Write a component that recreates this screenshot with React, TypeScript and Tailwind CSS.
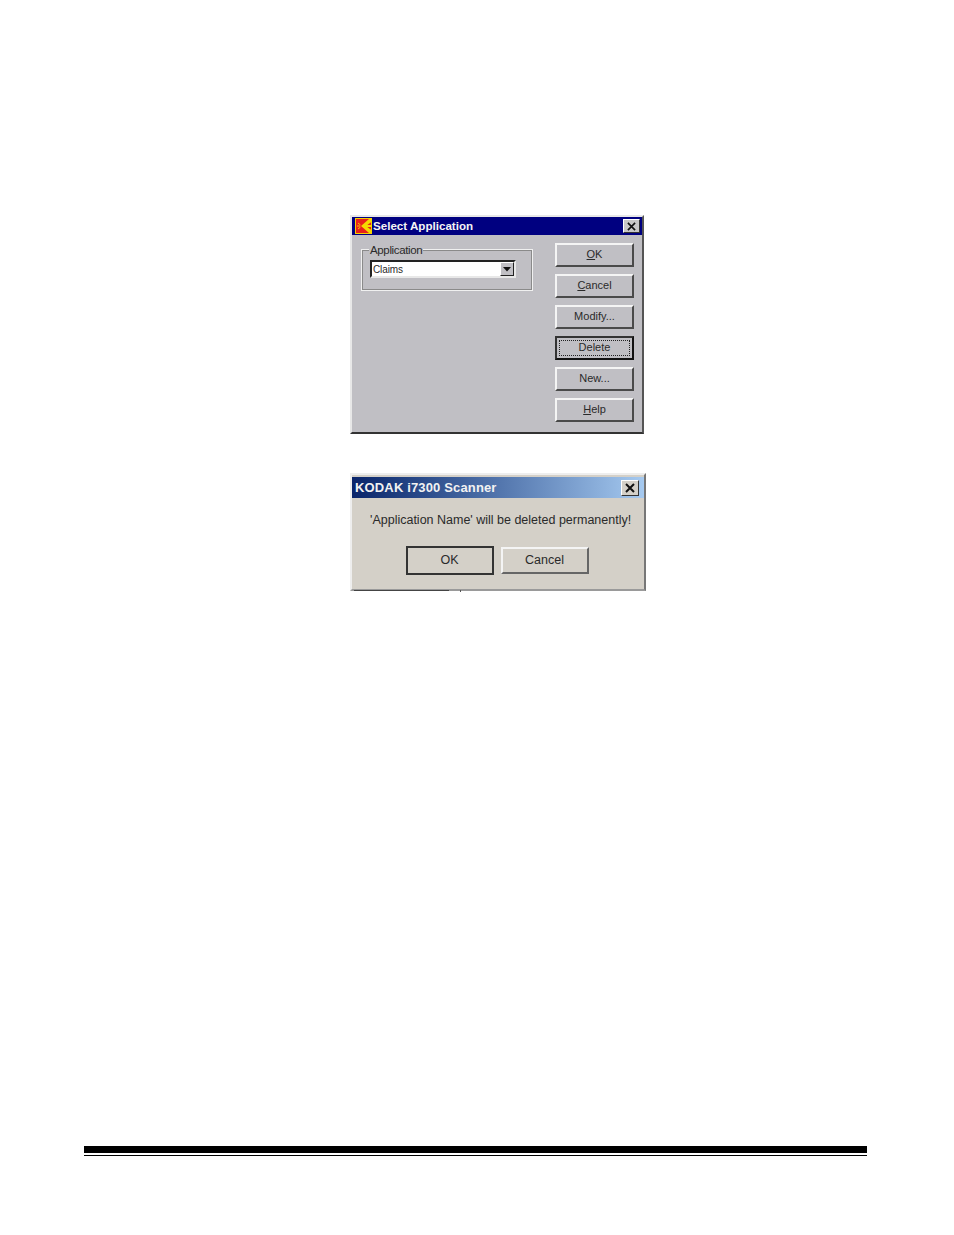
const FONT = "font-['Liberation_Sans',Arial,sans-serif]";

function Win98Button({ label, ul, focused }: { label: string; ul?: string; focused?: boolean }) {
  const rest = ul ? label.slice(1) : label;
  const inner = (
    <span className="pb-px text-[11px] leading-none text-[#2a2a2a]">
      {ul ? <span className="underline">{ul}</span> : null}
      {rest}
    </span>
  );
  if (focused) {
    return (
      <div className="flex h-6 w-[79px] items-center justify-center border-2 border-t-[#333] border-l-[#333] border-r-[#111] border-b-[#111] bg-[#c0bfc4]">
        <div className="flex h-[16px] w-[71px] items-center justify-center border border-dotted border-[#222]">{inner}</div>
      </div>
    );
  }
  return (
    <div className="flex h-6 w-[79px] items-center justify-center border-2 border-t-[#f4f4f4] border-l-[#f4f4f4] border-r-[#4a4a4a] border-b-[#4a4a4a] bg-[#c0bfc4]">
      {inner}
    </div>
  );
}

function KodakIcon() {
  return (
    <svg width="17" height="16" viewBox="0 0 17 16" className="shrink-0">
      <rect width="17" height="16" fill="#f5d000" />
      <rect x="1" y="1" width="15" height="14" fill="#e8201a" />
      <path d="M14 1 L17 1 L17 3.5 L11 8 L17 12.5 L17 15 L14 15 L6 8 Z" fill="#f5d800" />
      <rect x="11" y="7" width="6" height="2" fill="#f5d800" />
      <path d="M5.5 7 L3 5 M5 8 L2 8 M5.5 9 L3 11" stroke="#f5d800" strokeWidth="0.9" />
    </svg>
  );
}

function CloseX({ size, stroke }: { size: number; stroke: number }) {
  return (
    <svg width={size} height={size} viewBox="0 0 10 10">
      <path d="M1 1 L9 9 M9 1 L1 9" stroke="#111" strokeWidth={stroke} />
    </svg>
  );
}

function SelectApplication() {
  return (
    <div className="flex h-[219px] w-[294px] flex-col border-2 border-t-[#e8e8e8] border-l-[#e8e8e8] border-r-[#555] border-b-[#333] bg-[#c0bfc4]">
      <div className="flex h-[18px] items-center justify-between bg-[#000080] pl-[3px] pr-[2px]">
        <div className="flex items-center gap-[1px]">
          <KodakIcon />
          <span className="text-[11.6px] font-bold leading-[14px] text-[#f4f4f4]">Select Application</span>
        </div>
        <div className="flex h-[14px] w-[17px] items-center justify-center border border-t-white border-l-white border-r-[#333] border-b-[#333] bg-[#c8c8c8]">
          <CloseX size={9} stroke={1.8} />
        </div>
      </div>
      <div className="flex flex-1 justify-between pl-[9px] pr-2 pt-2">
        <div className="relative mt-[6px] h-[42px] w-[172px] border-2 border-[#f0f0f0] pl-[7px] pt-[9px] outline outline-1 -outline-offset-2 outline-[#8a8a8a]">
          <span className="absolute -top-[7px] left-[6px] bg-[#c0bfc4] px-[1px] text-[11.5px] leading-[13px] tracking-[-0.35px] text-[#2a2a2a]">Application</span>
          <div className="flex h-[18px] w-[146px] items-center justify-between border-2 border-t-[#222] border-l-[#222] border-r-[#e8e8e8] border-b-[#e8e8e8] bg-white pl-[1px]">
            <span className="pt-px text-[10px] leading-none tracking-[-0.1px] text-[#2a2a2a]">Claims</span>
            <div className="flex h-[14px] w-[14px] items-center justify-center border border-t-white border-l-white border-r-[#222] border-b-[#222] bg-[#c0bfc4]">
              <svg width="8" height="5" viewBox="0 0 8 5">
                <path d="M0 0 H8 L4 4.5 Z" fill="#111" />
              </svg>
            </div>
          </div>
        </div>
        <div className="flex flex-col gap-[7px]">
          <Win98Button label="OK" ul="O" />
          <Win98Button label="Cancel" ul="C" />
          <Win98Button label="Modify..." />
          <Win98Button label="Delete" focused />
          <Win98Button label="New..." />
          <Win98Button label="Help" ul="H" />
        </div>
      </div>
    </div>
  );
}

function ConfirmDelete() {
  return (
    <div className="relative flex h-[118px] w-[296px] flex-col border-2 border-t-[#eeeeee] border-l-[#eeeeee] border-r-[#777] border-b-[#9a9a9a] bg-[#d4d0c8] pt-[2px]">
      <div className="flex h-[21px] items-center justify-between bg-gradient-to-r from-[#0a246a] to-[#a6caf0] pl-[3px] pr-[5px]">
        <span className="text-[13px] font-bold leading-none tracking-[0.15px] text-[#f2f2f2]">KODAK i7300 Scanner</span>
        <div className="flex h-[16px] w-[18px] items-center justify-center border border-t-white border-l-white border-r-[#333] border-b-[#333] bg-[#d4d0c8]">
          <CloseX size={10} stroke={2} />
        </div>
      </div>
      <p className="mt-[15px] pl-[18px] text-[12.5px] leading-[15px] text-[#2a2a2a]">'Application Name' will be deleted permanently!</p>
      <div className="mt-[18px] flex items-center gap-[7px] pl-[54px]">
        <div className="flex h-[29px] w-[88px] items-center justify-center border-2 border-[#333] bg-[#d4d0c8] pr-px text-[12.5px] leading-none text-[#2a2a2a]">OK</div>
        <div className="flex h-[27px] w-[88px] items-center justify-center border-2 border-t-[#f4f4f4] border-l-[#f4f4f4] border-r-[#666] border-b-[#666] bg-[#d4d0c8] pr-px text-[12.5px] leading-none text-[#2a2a2a]">Cancel</div>
      </div>
      <div className="absolute -bottom-[2px] left-[2px] h-px w-[95px] bg-[#444]" />
      <div className="absolute -bottom-[3px] left-[108px] h-[2px] w-px bg-[#555]" />
    </div>
  );
}

export default function App() {
  return (
    <div className={`h-[1235px] w-[954px] bg-white ${FONT}`}>
      <div className="flex flex-col gap-[39px] pl-[350px] pt-[215px]">
        <SelectApplication />
        <ConfirmDelete />
      </div>
      <div className="ml-[84px] mt-[555px] w-[783px]">
        <div className="h-[7px] bg-black" />
        <div className="mt-[2px] h-px bg-black" />
      </div>
    </div>
  );
}
